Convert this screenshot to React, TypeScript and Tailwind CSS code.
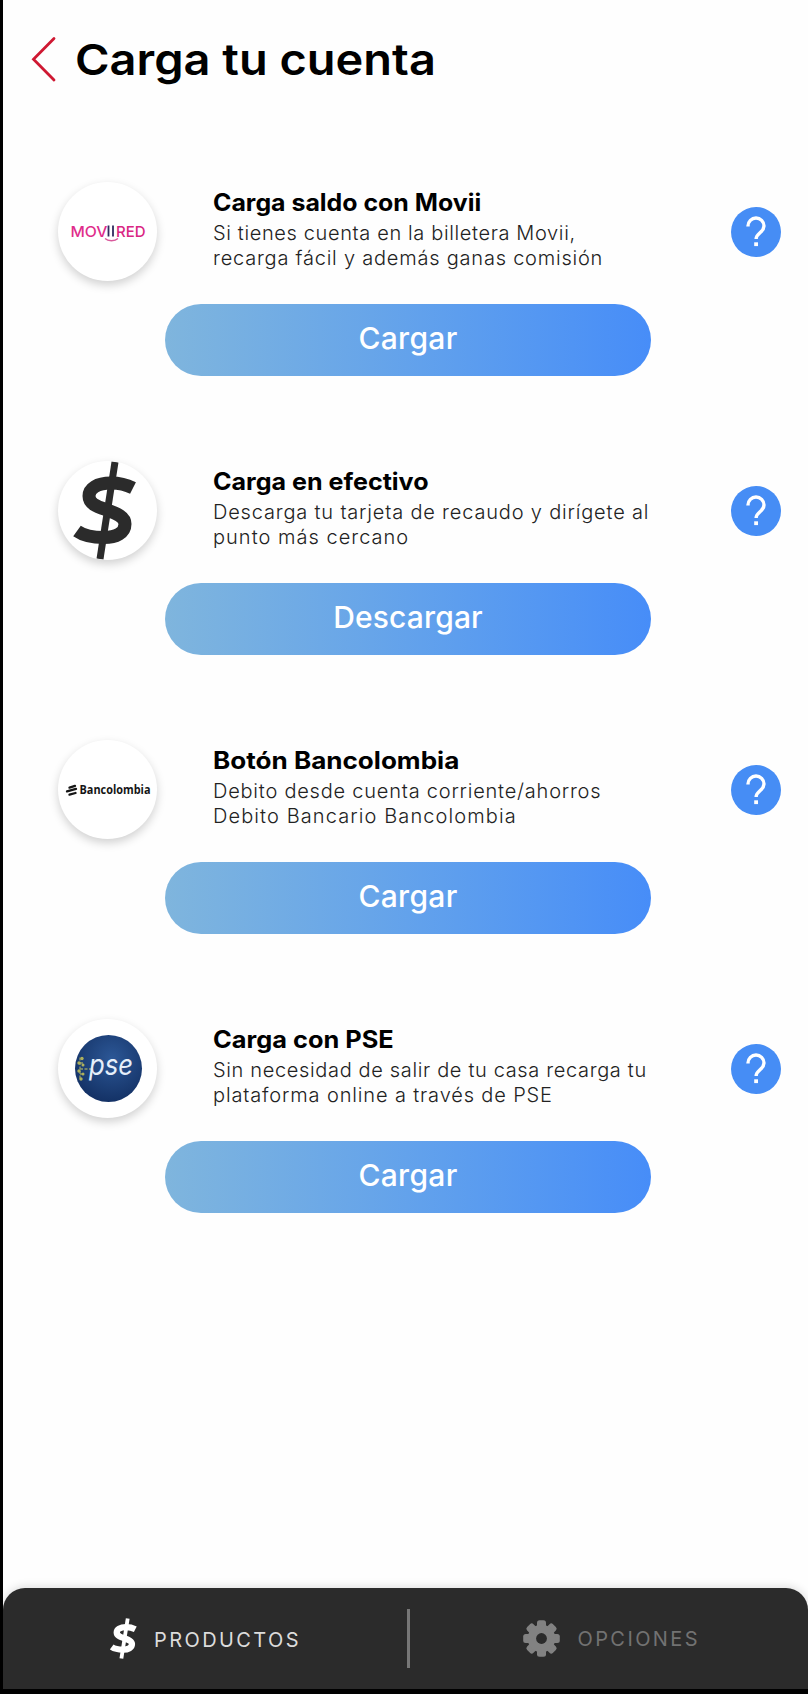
import type { ReactNode } from "react";

type Line = { text: string; fit: string };

type ChargeOption = {
  title: Line;
  lines: Line[];
  action: Line;
  logo: ReactNode;
};

const options: ChargeOption[] = [
  {
    title: { text: "Carga saldo con Movii", fit: "scale-x-[1.037]" },
    lines: [
      { text: "Si tienes cuenta en la billetera Movii,", fit: "tracking-[0.63px]" },
      { text: "recarga fácil y además ganas comisión", fit: "tracking-[0.78px]" },
    ],
    action: { text: "Cargar", fit: "tracking-[0.3px]" },
    logo: <MoviiredLogo />,
  },
  {
    title: { text: "Carga en efectivo", fit: "scale-x-[1.045]" },
    lines: [
      { text: "Descarga tu tarjeta de recaudo y dirígete al", fit: "tracking-[0.82px]" },
      { text: "punto más cercano", fit: "tracking-[1.02px]" },
    ],
    action: { text: "Descargar", fit: "tracking-[0.15px]" },
    logo: <DollarIcon className="mr-[6px] h-[99px] w-[64px] text-[#2b2b2b]" />,
  },
  {
    title: { text: "Botón Bancolombia", fit: "scale-x-[1.086]" },
    lines: [
      { text: "Debito desde cuenta corriente/ahorros", fit: "tracking-[0.78px]" },
      { text: "Debito Bancario Bancolombia", fit: "tracking-[1.1px]" },
    ],
    action: { text: "Cargar", fit: "tracking-[0.3px]" },
    logo: <BancolombiaLogo />,
  },
  {
    title: { text: "Carga con PSE", fit: "scale-x-[1.057]" },
    lines: [
      { text: "Sin necesidad de salir de tu casa recarga tu", fit: "tracking-[0.65px]" },
      { text: "plataforma online a través de PSE", fit: "tracking-[0.86px]" },
    ],
    action: { text: "Cargar", fit: "tracking-[0.3px]" },
    logo: <PseLogo />,
  },
];

export default function App() {
  return (
    <div className="flex h-[1694px] w-[808px] flex-col overflow-hidden border-b-[5px] border-l-[3px] border-black bg-[#fefefe] font-['Inter','Liberation_Sans',sans-serif]">
      <header className="flex h-[164px] shrink-0 items-start pl-[28px] pt-[36px]">
        <svg className="h-[46px] w-[26px]" viewBox="0 0 26 46" fill="none">
          <path d="M23 2.5 2.5 23.3 23 44" stroke="#cf1832" strokeWidth="2.8" strokeLinecap="round" />
        </svg>
        <h1 className="ml-[18px] mt-[-5px] origin-left scale-x-[1.092] whitespace-nowrap text-[43px] font-semibold leading-[56px] text-black">
          Carga tu cuenta
        </h1>
      </header>

      <main className="flex-1">
        {options.map((option) => (
          <ChargeRow key={option.title.text} option={option} />
        ))}
      </main>

      <BottomNav />
    </div>
  );
}

function ChargeRow({ option }: { option: ChargeOption }) {
  return (
    <section className="h-[279px] pt-[18px]">
      <div className="flex h-[100px]">
        <div className="ml-[55px] flex size-[99px] shrink-0 items-center justify-center overflow-hidden rounded-full bg-white shadow-[0_4px_10px_rgba(0,0,0,0.18)]">
          {option.logo}
        </div>
        <div className="ml-[56px] w-[480px] pt-[7px]">
          <h2 className={`w-fit origin-left whitespace-nowrap text-[24px] font-bold leading-[28px] text-black ${option.title.fit}`}>
            {option.title.text}
          </h2>
          <div className="pt-[4px]">
            {option.lines.map((line) => (
              <p
                className={`whitespace-nowrap text-[20px] font-light leading-[24.7px] text-[#222] ${line.fit}`}
                key={line.text}
              >
                {line.text}
              </p>
            ))}
          </div>
        </div>
        <button className="ml-[38px] mt-[25px] flex size-[50px] shrink-0 items-center justify-center rounded-full bg-[#468df5]">
          <svg className="h-[32px] w-[20px]" viewBox="0 0 20 32" fill="none" stroke="#fff" strokeWidth="3.4">
            <path d="M2 10.5V10a8 8 0 0 1 16 0c0 3.2-1.7 4.8-4 6.8-2.6 2.2-3.9 3.4-3.9 6.2" />
            <path d="M8.2 28.2h3.8" strokeWidth="3.8" />
          </svg>
        </button>
      </div>
      <button
        className={`ml-[162px] mt-[22px] flex h-[72px] w-[486px] items-center justify-center rounded-full bg-gradient-to-r from-[#7fb5dd] to-[#478df8] pb-[4px] text-[30px] font-medium text-white ${option.action.fit}`}
      >
        {option.action.text}
      </button>
    </section>
  );
}

function BottomNav() {
  return (
    <nav className="flex h-[101px] shrink-0 items-center rounded-t-[22px] bg-[#2b2b2b] shadow-[0_-2px_8px_rgba(0,0,0,0.12)]">
      <div className="flex w-[404px] items-center pl-[107px]">
        <DollarIcon className="h-[41px] w-[27px] text-white" bold />
        <span className="ml-[17px] mt-[2px] whitespace-nowrap text-[20px] tracking-[2.4px] text-[#dcdcdc]">PRODUCTOS</span>
      </div>
      <span className="h-[59px] w-[2.5px] bg-[#777]" />
      <div className="flex items-center pl-[113px]">
        <GearIcon />
        <span className="ml-[18px] mt-[1px] whitespace-nowrap text-[20px] tracking-[2.4px] text-[#727272]">OPCIONES</span>
      </div>
    </nav>
  );
}

function DollarIcon({ className, bold = false }: { className: string; bold?: boolean }) {
  return (
    <svg className={className} viewBox="0 0 64 99" preserveAspectRatio="none" fill="none" stroke="currentColor">
      <path d="M42 1 27 98" strokeWidth={bold ? 9 : 7} />
      <path
        d="M60 27C53 23.5 45 22 38 22C24 22 16 27.5 16 35C16 43 24 45.5 34 49C45 53 52 56 52 63C52 72 43 76.5 31 76.5C21 76.5 11 75 4 70"
        strokeWidth={bold ? 15 : 13}
      />
    </svg>
  );
}

function GearIcon() {
  return (
    <svg className="size-[37px]" viewBox="-18.5 -18.5 37 37" fill="#828282">
      {[0, 45, 90, 135].map((angle) => (
        <rect key={angle} x="-4.5" y="-18.3" width="9" height="36.6" rx="2.5" transform={`rotate(${angle})`} />
      ))}
      <circle r="13.8" />
      <circle r="5.4" fill="#2b2b2b" />
    </svg>
  );
}

function MoviiredLogo() {
  return (
    <svg className="size-[100px] shrink-0" viewBox="0 0 100 100" fontFamily="Inter, sans-serif" fontSize="15" fontWeight="500">
      <text x="12.5" y="54.5" fill="#df2d8b" textLength="37" lengthAdjust="spacingAndGlyphs">MOV</text>
      <path d="M50.5 43.5v11M55 43.5v11" stroke="#2f2c5e" strokeWidth="1.8" />
      <text x="58" y="54.5" fill="#d92683" textLength="29.5" lengthAdjust="spacingAndGlyphs">RED</text>
      <path d="M47 56.5c3 3 10 3 13 0" stroke="#d95a9c" strokeWidth="1.3" fill="none" />
    </svg>
  );
}

function BancolombiaLogo() {
  return (
    <svg className="size-[100px] shrink-0" viewBox="0 0 100 100">
      <path
        d="M11.5 47.6 17 45.9M9 51.4 18 48.9M11.5 54.6 17.5 53"
        stroke="#151515"
        strokeWidth="2.3"
        strokeLinecap="round"
      />
      <text
        x="21.5"
        y="54"
        fill="#151515"
        fontFamily="'Open Sans', sans-serif"
        fontSize="11.5"
        fontWeight="700"
        textLength="71"
        lengthAdjust="spacingAndGlyphs"
      >
        Bancolombia
      </text>
    </svg>
  );
}

function PseLogo() {
  return (
    <svg className="size-[100px] shrink-0" viewBox="0 0 100 100">
      <defs>
        <radialGradient id="pse" cx="0.55" cy="0.35" r="0.7">
          <stop offset="0" stopColor="#2c5796" />
          <stop offset="1" stopColor="#122f62" />
        </radialGradient>
      </defs>
      <circle cx="50.5" cy="49.5" r="33.5" fill="url(#pse)" />
      <path
        d="M22 38.5v22M22 44h4M22 50h11M22 55h4"
        stroke="#8f9a68"
        strokeWidth="1.3"
        strokeDasharray="3 1.5"
        fill="none"
      />
      <g fill="#aeb05c">
        <circle cx="24" cy="39.5" r="1.7" />
        <circle cx="21" cy="44" r="1.7" />
        <circle cx="25" cy="46" r="1.5" />
        <circle cx="21" cy="52" r="1.7" />
        <circle cx="25" cy="55" r="1.5" />
        <circle cx="23" cy="60" r="1.7" />
      </g>
      <text
        x="31"
        y="56"
        fill="#e6effa"
        fontFamily="Inter, sans-serif"
        fontSize="29"
        fontStyle="italic"
        fontWeight="400"
        textLength="44"
        lengthAdjust="spacingAndGlyphs"
      >
        pse
      </text>
    </svg>
  );
}
